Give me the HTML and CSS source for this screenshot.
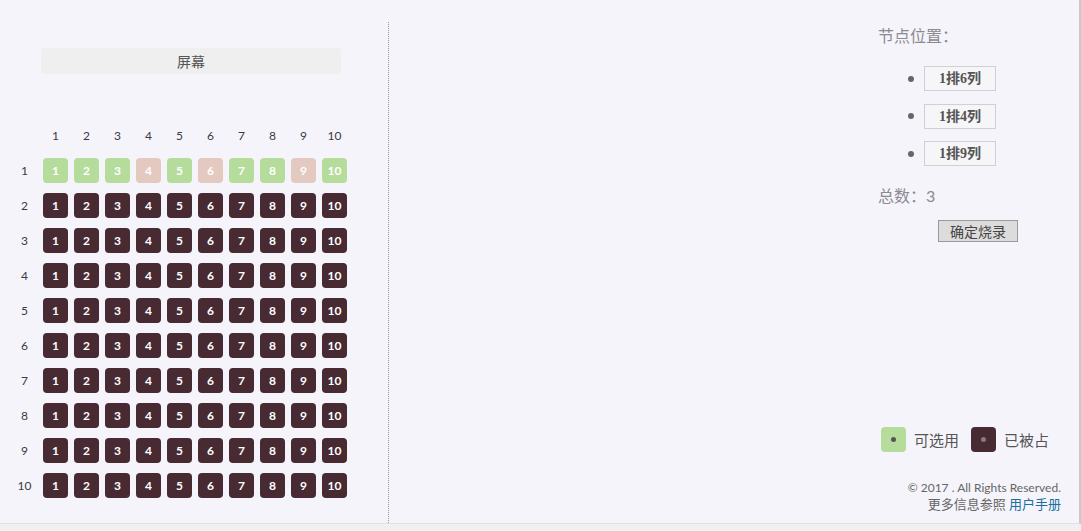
FILE: index.html
```html
<!DOCTYPE html>
<html lang="zh">
<head>
<meta charset="utf-8">
<title>选座</title>
<link rel="stylesheet" href="styles.css">
</head>
<body>
<div class="page">
  <section class="left">
    <div class="screen">屏幕</div>
    <div class="grid">
      <span></span>
      <span class="col">1</span><span class="col">2</span><span class="col">3</span><span class="col">4</span><span class="col">5</span><span class="col">6</span><span class="col">7</span><span class="col">8</span><span class="col">9</span><span class="col">10</span>

      <span class="row">1</span>
      <span class="seat free">1</span><span class="seat free">2</span><span class="seat free">3</span><span class="seat pick">4</span><span class="seat free">5</span><span class="seat pick">6</span><span class="seat free">7</span><span class="seat free">8</span><span class="seat pick">9</span><span class="seat free">10</span>

      <span class="row">2</span>
      <span class="seat">1</span><span class="seat">2</span><span class="seat">3</span><span class="seat">4</span><span class="seat">5</span><span class="seat">6</span><span class="seat">7</span><span class="seat">8</span><span class="seat">9</span><span class="seat">10</span>
      <span class="row">3</span>
      <span class="seat">1</span><span class="seat">2</span><span class="seat">3</span><span class="seat">4</span><span class="seat">5</span><span class="seat">6</span><span class="seat">7</span><span class="seat">8</span><span class="seat">9</span><span class="seat">10</span>
      <span class="row">4</span>
      <span class="seat">1</span><span class="seat">2</span><span class="seat">3</span><span class="seat">4</span><span class="seat">5</span><span class="seat">6</span><span class="seat">7</span><span class="seat">8</span><span class="seat">9</span><span class="seat">10</span>
      <span class="row">5</span>
      <span class="seat">1</span><span class="seat">2</span><span class="seat">3</span><span class="seat">4</span><span class="seat">5</span><span class="seat">6</span><span class="seat">7</span><span class="seat">8</span><span class="seat">9</span><span class="seat">10</span>
      <span class="row">6</span>
      <span class="seat">1</span><span class="seat">2</span><span class="seat">3</span><span class="seat">4</span><span class="seat">5</span><span class="seat">6</span><span class="seat">7</span><span class="seat">8</span><span class="seat">9</span><span class="seat">10</span>
      <span class="row">7</span>
      <span class="seat">1</span><span class="seat">2</span><span class="seat">3</span><span class="seat">4</span><span class="seat">5</span><span class="seat">6</span><span class="seat">7</span><span class="seat">8</span><span class="seat">9</span><span class="seat">10</span>
      <span class="row">8</span>
      <span class="seat">1</span><span class="seat">2</span><span class="seat">3</span><span class="seat">4</span><span class="seat">5</span><span class="seat">6</span><span class="seat">7</span><span class="seat">8</span><span class="seat">9</span><span class="seat">10</span>
      <span class="row">9</span>
      <span class="seat">1</span><span class="seat">2</span><span class="seat">3</span><span class="seat">4</span><span class="seat">5</span><span class="seat">6</span><span class="seat">7</span><span class="seat">8</span><span class="seat">9</span><span class="seat">10</span>
      <span class="row">10</span>
      <span class="seat">1</span><span class="seat">2</span><span class="seat">3</span><span class="seat">4</span><span class="seat">5</span><span class="seat">6</span><span class="seat">7</span><span class="seat">8</span><span class="seat">9</span><span class="seat">10</span>
    </div>
  </section>
  <section class="middle"></section>
  <aside class="side">
    <div class="label">节点位置：</div>
    <ul class="picked">
      <li><span class="tag">1排6列</span></li>
      <li><span class="tag">1排4列</span></li>
      <li><span class="tag">1排9列</span></li>
    </ul>
    <div class="label total">总数：3</div>
    <button class="confirm" type="button">确定烧录</button>
    <div class="legend">
      <span class="key free-key"><i></i></span><span class="key-text">可选用</span>
      <span class="key taken-key"><i></i></span><span class="key-text">已被占</span>
    </div>
    <footer class="foot">
      <div class="copy">© 2017 . All Rights Reserved.</div>
      <div>更多信息参照 <a href="#">用户手册</a></div>
    </footer>
  </aside>
</div>
</body>
</html>
```

FILE: styles.css
```css
html, body {
  margin: 0;
  padding: 0;
}
body {
  background: #f0f0f2;
  font-family: Lato, "Noto Sans CJK SC", sans-serif;
  height: 531px;
  overflow: hidden;
}
.page {
  display: flex;
  width: 1081px;
  height: 524px;
  box-sizing: border-box;
  background: #f5f4fa;
  border-right: 2px solid #c9c9cc;
  border-bottom: 1px solid #e1e1e6;
}
.left {
  width: 388px;
  margin-top: 22px;
  padding-top: 26px;
  border-right: 1px dotted #999;
}
.screen {
  margin-left: 41px;
  width: 300px;
  height: 26px;
  line-height: 26px;
  background: #efefef;
  border-radius: 3px;
  text-align: center;
  font-family: "Noto Sans CJK SC", sans-serif;
  font-size: 14px;
  color: #555;
}
.grid {
  display: grid;
  grid-template-columns: repeat(11, 25px);
  grid-auto-rows: 25px;
  column-gap: 6px;
  row-gap: 10px;
  padding-left: 12px;
  margin-top: 49px;
}
.grid span {
  display: flex;
  align-items: center;
  justify-content: center;
  font-size: 12px;
}
.col, .row {
  color: #3a3a44;
}
.seat {
  background: #482a32;
  border-radius: 4px;
  color: #fff;
  font-weight: bold;
}
.seat.free {
  background: #b5dc9b;
}
.seat.pick {
  background: #e4c9c0;
}
.middle {
  flex: 1;
}
.side {
  width: 201px;
  display: flex;
  flex-direction: column;
  padding-top: 25px;
  padding-bottom: 10px;
  box-sizing: border-box;
}
.label {
  font-family: Lato, "Noto Sans CJK SC", sans-serif;
  font-size: 16px;
  line-height: 22px;
  color: #8a8a92;
}
.picked {
  list-style: none;
  margin: 19px 0 0;
  padding: 0 0 0 30px;
  display: flex;
  flex-direction: column;
  row-gap: 12.5px;
}
.picked li {
  display: flex;
  align-items: center;
  height: 25px;
}
.picked li::before {
  content: "";
  width: 6px;
  height: 6px;
  border-radius: 50%;
  background: #666;
  margin-right: 10px;
}
.tag {
  box-sizing: border-box;
  width: 72px;
  height: 25px;
  line-height: 23px;
  border: 1px solid #cfcfd4;
  background: #f6f6f8;
  text-align: center;
  font-family: "Liberation Serif", "Noto Sans CJK SC", serif;
  font-weight: bold;
  font-size: 14px;
  color: #555;
}
.total {
  margin-top: 19px;
}
.confirm {
  margin: 13px 0 0 60px;
  width: 80px;
  height: 22px;
  padding: 0;
  background: #dcdcdc;
  border: 1px solid #9a9a9a;
  font-family: "Noto Sans CJK SC", sans-serif;
  font-size: 14px;
  line-height: 20px;
  color: #444;
}
.legend {
  margin-top: auto;
  display: flex;
  align-items: center;
  padding-left: 3px;
}
.key {
  width: 25px;
  height: 25px;
  border-radius: 4px;
  display: flex;
  align-items: center;
  justify-content: center;
}
.key i {
  width: 5px;
  height: 5px;
  border-radius: 50%;
}
.free-key { background: #b5dc9b; }
.free-key i { background: #555; }
.taken-key { background: #482a32; }
.taken-key i { background: #8a7a80; }
.key-text {
  font-family: "Noto Sans CJK SC", sans-serif;
  font-size: 15px;
  color: #555;
  margin: 0 12px 0 8px;
}
.foot {
  margin-top: 27px;
  padding-right: 18px;
  text-align: right;
  font-size: 13px;
  line-height: 17px;
  color: #666;
}
.foot .copy {
  font-size: 12px;
}
.foot a {
  color: #1b6f9d;
  text-decoration: none;
}
```
